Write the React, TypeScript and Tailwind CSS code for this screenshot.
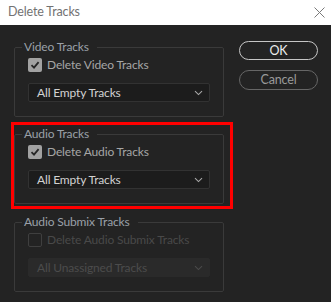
import React from "react";

const font = { fontFamily: 'Lato, "Noto Sans", sans-serif', letterSpacing: "-0.15px" };

function Check({ checked, disabled }: { checked: boolean; disabled?: boolean }) {
  if (disabled) {
    return <div className="w-[14px] h-[14px] rounded-[2px] border border-[#3f3f3f] shrink-0" />;
  }
  return (
    <div className="w-[14px] h-[14px] rounded-[2px] bg-[#a2a2a2] shrink-0 flex items-center justify-center">
      {checked && (
        <svg width="10" height="10" viewBox="0 0 10 10">
          <path d="M1.5 5.2 L4 7.6 L8.6 2.2" fill="none" stroke="#262626" strokeWidth="1.8" />
        </svg>
      )}
    </div>
  );
}

function Chevron({ color }: { color: string }) {
  return (
    <svg width="9" height="6" viewBox="0 0 9 6">
      <path d="M1 1.2 L4.5 4.6 L8 1.2" fill="none" stroke={color} strokeWidth="1.1" />
    </svg>
  );
}

function Group({
  legend,
  label,
  value,
  disabled,
  className,
}: {
  legend: string;
  label: string;
  value: string;
  disabled?: boolean;
  className?: string;
}) {
  return (
    <fieldset className={`border border-[#3a3a3a] rounded-[2px] px-[13px] pb-[14px] ${className ?? ""}`}>
      <legend className="ml-[-6px] pl-[2px] pr-[8px] text-[12px] leading-[14px] text-[#9aa0a8]">{legend}</legend>
      <div className="flex items-center gap-[5px] mt-[4px] h-[14px]">
        <Check checked={!disabled} disabled={disabled} />
        <span className={`text-[12px] leading-[14px] ${disabled ? "text-[#494949]" : "text-[#a6a6a6]"}`}>{label}</span>
      </div>
      <div
        className={`mt-[11px] h-[19px] rounded-[2px] flex items-center justify-between pl-[8px] pr-[6px] ${
          disabled ? "bg-[#2a2a2a] border border-[#2a2a2a]" : "bg-[#1c1c1c] border border-[#323232]"
        }`}
      >
        <span className={`text-[12px] leading-[14px] ${disabled ? "text-[#4c4c4c]" : "text-[#d2d2d2]"}`}>{value}</span>
        <Chevron color={disabled ? "#4a4a4a" : "#a8a8a8"} />
      </div>
    </fieldset>
  );
}

export default function App() {
  return (
    <div className="w-[331px] h-[302px] bg-[#232323] flex flex-col overflow-hidden relative" style={font}>
      <div className="h-[25px] bg-white flex items-center justify-between pl-[8px] pr-[6px] shrink-0">
        <span className="text-[12.5px] text-[#727272]">Delete Tracks</span>
        <svg width="11" height="11" viewBox="0 0 11 11">
          <path d="M0.5 0.5 L10.5 10.5 M10.5 0.5 L0.5 10.5" stroke="#7a7a7a" strokeWidth="1" />
        </svg>
      </div>
      <div className="flex pl-[14px] pt-[15px]">
        <div className="w-[210px] flex flex-col">
          <Group legend="Video Tracks" label="Delete Video Tracks" value="All Empty Tracks" />
          <Group className="mt-[10px]" legend="Audio Tracks" label="Delete Audio Tracks" value="All Empty Tracks" />
          <Group
            className="mt-[11px]"
            legend="Audio Submix Tracks"
            label="Delete Audio Submix Tracks"
            value="All Unassigned Tracks"
            disabled
          />
        </div>
        <div className="ml-[15px] pt-[1px] flex flex-col gap-[10px]">
          <button className="w-[79px] h-[19px] rounded-full border border-[#c6c6c6] text-[12.5px] leading-[14px] text-[#ececec]">
            OK
          </button>
          <button className="w-[79px] h-[20px] rounded-full border border-[#666666] text-[12.5px] leading-[14px] text-[#9a9a9a]">
            Cancel
          </button>
        </div>
      </div>
      <div className="absolute left-[11px] top-[122px] w-[222px] h-[87px] border-[3px] border-[#ff0000] pointer-events-none" />
    </div>
  );
}
